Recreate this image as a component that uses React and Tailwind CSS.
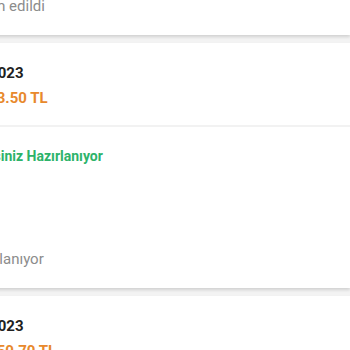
const orders = [
  {
    date: "12.06.2023",
    price: "Tutar: 3.50 TL",
    status: "Siparişiniz Hazırlanıyor",
    note: "Faturalanıyor",
  },
  {
    date: "28.05.2023",
    price: "Tutar: 50.70 TL",
    status: "Siparişiniz Hazırlanıyor",
    note: "Faturalanıyor",
  },
];

function OrderCard({ order }) {
  return (
    <div className="bg-white shadow-[0_2px_3px_rgba(0,0,0,0.14)]">
      <div className="pt-[20px] pb-[17px]">
        <p className="-ml-[7px] text-[15px] leading-[20px] font-bold text-[#212121]">{order.date}</p>
        <p className="mt-[5px] text-[15px] leading-[20px] font-bold text-[#e8892c]">{order.price}</p>
      </div>
      <div className="h-[2px] bg-[#f2f2f2]" />
      <div className="h-[161px] pt-[19px] pb-[19px] flex flex-col justify-between">
        <p className="pl-[4px] text-[14px] leading-[20px] font-bold text-[#2db36a]">{order.status}</p>
        <p className="pl-[4px] text-[15px] leading-[20px] text-[#8c8c8c]">{order.note}</p>
      </div>
    </div>
  );
}

export default function App() {
  return (
    <div
      className="w-[350px] h-[350px] overflow-hidden bg-[#f3f3f3]"
      style={{ fontFamily: "Roboto, 'Noto Sans', sans-serif" }}
    >
      <div className="-ml-[47px] -mt-[4px] flex flex-col gap-[8px]">
        <div className="bg-white pb-[19px] shadow-[0_2px_3px_rgba(0,0,0,0.14)]">
          <p className="pl-[8px] text-[15px] leading-[20px] text-[#8c8c8c]">Teslim edildi</p>
        </div>
        {orders.map((o) => (
          <OrderCard key={o.date} order={o} />
        ))}
      </div>
    </div>
  );
}
